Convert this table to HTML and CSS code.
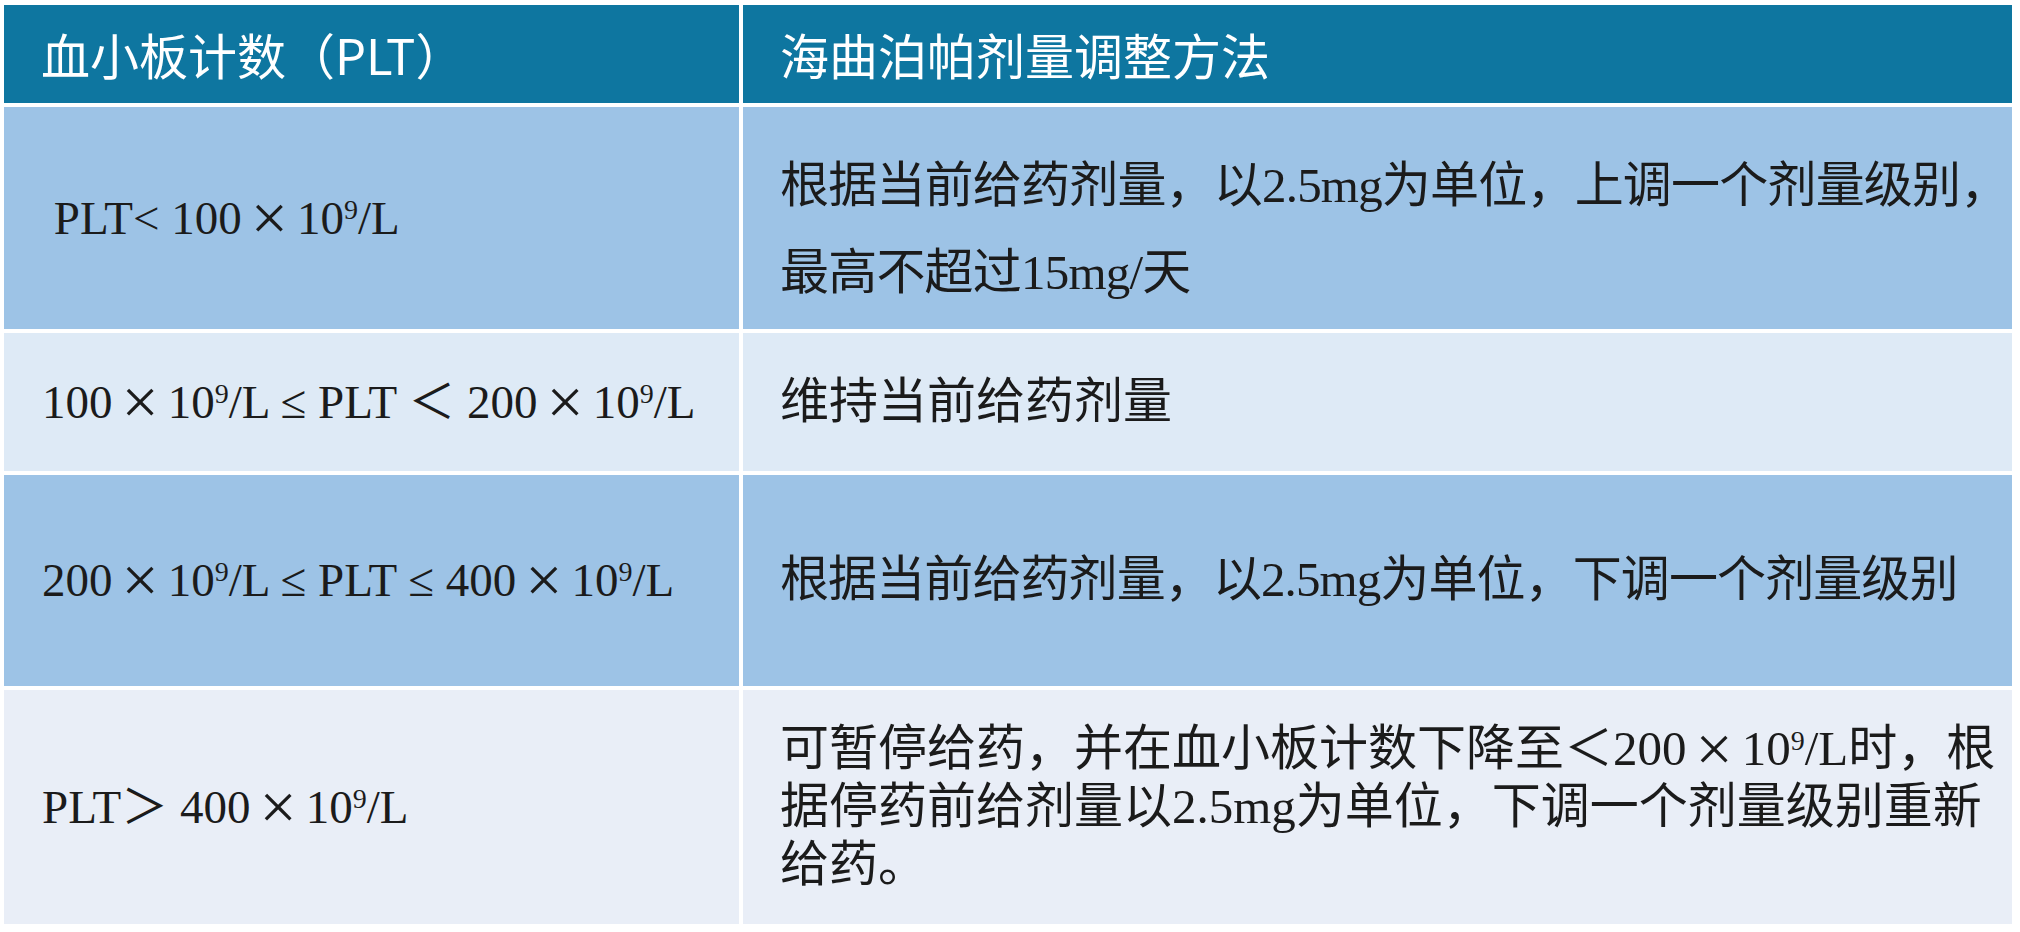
FILE: index.html
```html
<!DOCTYPE html>
<html lang="zh-CN">
<head>
<meta charset="utf-8">
<title>海曲泊帕剂量调整方法</title>
<link rel="stylesheet" href="styles.css">
</head>
<body>
<table class="dose-table">
  <colgroup>
    <col class="col-plt">
    <col class="col-method">
  </colgroup>
  <thead>
    <tr class="row-head">
      <th>血小板计数（PLT）</th>
      <th>海曲泊帕剂量调整方法</th>
    </tr>
  </thead>
  <tbody>
    <tr class="row-1 tone-dark">
      <td class="plt">&nbsp;PLT&lt; 100<span class="x">×</span>10<span class="sup">9</span>/L</td>
      <td class="method method-spaced">根据当前给药剂量，以2.5mg为单位，上调一个剂量级别，<br>最高不超过15mg/天</td>
    </tr>
    <tr class="row-2 tone-light">
      <td class="plt">100<span class="x">×</span>10<span class="sup">9</span>/L ≤ PLT ＜ 200<span class="x">×</span>10<span class="sup">9</span>/L</td>
      <td class="method">维持当前给药剂量</td>
    </tr>
    <tr class="row-3 tone-dark">
      <td class="plt">200<span class="x">×</span>10<span class="sup">9</span>/L ≤ PLT ≤ 400<span class="x">×</span>10<span class="sup">9</span>/L</td>
      <td class="method method-tight">根据当前给药剂量，以2.5mg为单位，下调一个剂量级别</td>
    </tr>
    <tr class="row-4 tone-pale">
      <td class="plt">PLT＞ 400<span class="x">×</span>10<span class="sup">9</span>/L</td>
      <td class="method method-dense">可暂停给药，并在血小板计数下降至＜200<span class="x">×</span>10<span class="sup">9</span>/L时，根<br>据停药前给剂量以2.5mg为单位，下调一个剂量级别重新<br>给药。</td>
    </tr>
  </tbody>
</table>
</body>
</html>
```

FILE: styles.css
```css
html,
body {
  margin: 0;
  background: #ffffff;
}

body {
  padding-top: 1px;
}

.dose-table {
  border-collapse: separate;
  border-spacing: 4px;
  table-layout: fixed;
  width: 2016px;
  color: #1b1b1b;
}

.col-plt {
  width: 735px;
}

.col-method {
  width: 1269px;
}

.row-head {
  height: 98px;
}

.row-1 {
  height: 222px;
}

.row-2 {
  height: 138px;
}

.row-3 {
  height: 211px;
}

.row-4 {
  height: 234px;
}

.dose-table th {
  background: #0e76a0;
  color: #ffffff;
  font-family: "Noto Sans CJK SC", "Noto Sans", sans-serif;
  font-size: 49px;
  font-weight: 400;
  line-height: 1.2;
  text-align: left;
  vertical-align: middle;
  padding: 0 0 0 37px;
}

.dose-table td {
  vertical-align: middle;
  text-align: left;
  white-space: nowrap;
  font-family: "Liberation Serif", "Noto Sans CJK SC", serif;
}

.tone-dark td {
  background: #9dc3e6;
}

.tone-light td {
  background: #deeaf6;
}

.tone-pale td {
  background: #e9eef7;
}

.plt {
  font-size: 47px;
  line-height: 1.2;
  padding: 0 0 0 38px;
}

.method {
  font-size: 49px;
  line-height: 1.2;
  padding: 0 0 0 37px;
}

.method-spaced {
  line-height: 87px;
  padding-top: 22px;
  letter-spacing: -0.8px;
}

.method-tight {
  letter-spacing: -0.9px;
}

.method-dense {
  line-height: 58px;
}

.x {
  font-family: "Liberation Serif", serif;
  font-size: 66px;
  line-height: 0;
  margin: 0 9px;
  vertical-align: -6px;
}

.sup {
  font-size: 28px;
  line-height: 0;
  vertical-align: 15px;
}
```
